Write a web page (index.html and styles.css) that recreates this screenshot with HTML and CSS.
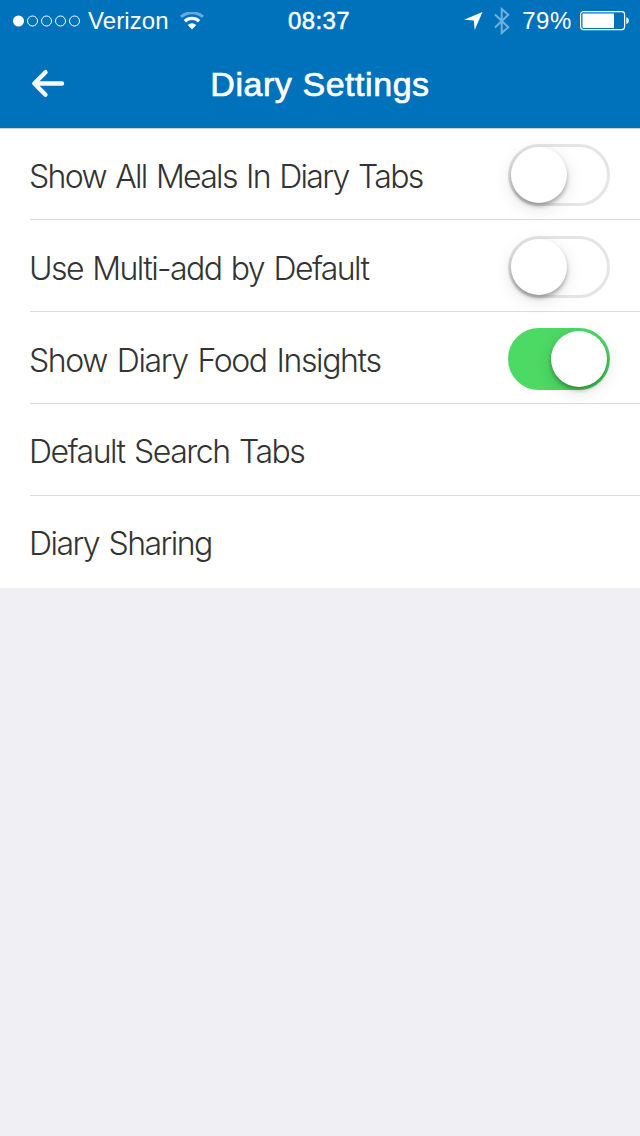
FILE: index.html
```html
<!DOCTYPE html>
<html lang="en">
<head>
    <meta charset="UTF-8">
    <title>Diary Settings</title>
    <link rel="stylesheet" href="styles.css">
</head>

<body>
<header class="header">
    <div class="status">
        <div class="status-left">
            <svg class="signal" width="68" height="14" viewBox="0 0 68 14" fill="none" stroke="#fff" stroke-width="1">
                <circle cx="5.5" cy="7" r="5.5" fill="#fff" stroke="none"/>
                <circle cx="19.5" cy="7" r="5"/>
                <circle cx="33.5" cy="7" r="5"/>
                <circle cx="47.5" cy="7" r="5"/>
                <circle cx="61.5" cy="7" r="5"/>
            </svg>
            <span class="carrier">Verizon</span>
            <svg class="wifi" width="24" height="18" viewBox="0 0 24 18" fill="none" stroke="#fff" stroke-width="3.2">
                <path d="M1 4.9A16.5 16.5 0 0 1 23 4.9" stroke-width="3" opacity=".4"/>
                <path d="M4.9 9.2A10.5 10.5 0 0 1 19.1 9.2"/>
                <path d="M12 17.4L7.8 13A5.9 5.9 0 0 1 16.2 13Z" fill="#fff" stroke="none"/>
            </svg>
        </div>
        <span class="time">08:37</span>
        <div class="status-right">
            <svg class="location" width="19" height="18" viewBox="0 0 19 18">
                <path d="M18.5 0L10.7 18L9.8 8.6L0 7.8Z" fill="#fff"/>
            </svg>
            <svg class="bluetooth" width="16" height="28" viewBox="0 0 16 28" fill="none" stroke="#6cb1e0" stroke-width="2">
                <path d="M1 7.5L14.3 20.2L7.7 26V2L14.3 7.8L1 20.5"/>
            </svg>
            <span class="percent">79%</span>
            <svg class="battery" width="49" height="20" viewBox="0 0 49 20">
                <rect x=".6" y=".6" width="44" height="18" rx="2.8" fill="none" stroke="#fff" stroke-width="1.2"/>
                <rect x="2.5" y="2.5" width="31.5" height="14.5" rx=".8" fill="#fff"/>
                <path d="M46.3 6.2C49.7 6.8 49.7 12.4 46.3 13Z" fill="#fff"/>
            </svg>
        </div>
    </div>
    <div class="nav">
        <svg class="back" width="34" height="30" viewBox="0 0 34 30" fill="none" stroke="#f7f7fc" stroke-width="4.4" stroke-linecap="round" stroke-linejoin="round">
            <path d="M14.5 3.2L3.3 14.5L14.5 25.8M4 14.5H31"/>
        </svg>
        <h1 class="title">Diary Settings</h1>
    </div>
</header>
<ul class="settings">
    <li class="row">
        <span class="label label-meals">Show All Meals In Diary Tabs</span>
        <span class="switch"><i class="knob"></i></span>
    </li>
    <li class="row">
        <span class="label label-multi">Use Multi-add by Default</span>
        <span class="switch"><i class="knob"></i></span>
    </li>
    <li class="row">
        <span class="label label-insights">Show Diary Food Insights</span>
        <span class="switch on"><i class="knob"></i></span>
    </li>
    <li class="row link">
        <span class="label label-search">Default Search Tabs</span>
    </li>
    <li class="row link">
        <span class="label label-sharing">Diary Sharing</span>
    </li>
</ul>
</body>
</html>
```
FILE: styles.css
```css
body,
ul,
li,
h1 {
    margin: 0;
    padding: 0;
    list-style: none;
}
body {
    background: #efeff4;
    font-family: "Liberation Sans", Arial, sans-serif;
    color: #333;
}
svg {
    display: block;
    flex: none;
}
.header {
    height: 128px;
    background: #0072bc;
    color: #fff;
}
.status {
    display: grid;
    grid-template-columns: 1fr auto 1fr;
    align-items: center;
    height: 40px;
    padding: 0 11px 0 9px;
    font-size: 24px;
    line-height: 40px;
    white-space: nowrap;
}
.status-left,
.status-right {
    display: flex;
    align-items: center;
    height: 41px;
}
.status-left {
    padding-left: 4px;
}
.status-right {
    justify-content: flex-end;
}
.carrier {
    margin-left: 7px;
    letter-spacing: 0.1px;
}
.wifi {
    margin-left: 11px;
}
.time {
    letter-spacing: 0.4px;
    -webkit-text-stroke: 0.5px #fff;
}
.bluetooth {
    margin-left: 11px;
}
.percent {
    margin-left: 12px;
    letter-spacing: 0.6px;
}
.battery {
    margin-left: 8px;
}
.nav {
    display: grid;
    grid-template-columns: 34px 1fr 34px;
    align-items: center;
    height: 88px;
    padding: 0 31px;
}
.title {
    font-size: 34px;
    font-weight: normal;
    line-height: 88px;
    letter-spacing: 0.55px;
    text-align: center;
    -webkit-text-stroke: 0.7px #fff;
}
.settings {
    padding-left: 30px;
    background: #fff;
    box-shadow: inset 0 1px #c8cdd2;
}
.row {
    display: flex;
    justify-content: space-between;
    align-items: flex-start;
    box-sizing: border-box;
    height: 92px;
    padding: 16px 30px 0 0;
    border-bottom: 1px solid #dcdcdf;
}
.row:last-child {
    border-bottom: none;
}
.label {
    font-family: Inter, "Liberation Sans", sans-serif;
    font-size: 32px;
    font-weight: 300;
    line-height: 65px;
    margin-left: -1px;
    word-spacing: 2px;
    white-space: nowrap;
}
.link .label {
    line-height: 63px;
}
.label-meals {
    letter-spacing: -1.68px;
}
.label-multi {
    letter-spacing: -1.58px;
}
.label-insights {
    letter-spacing: -1.36px;
}
.label-search {
    letter-spacing: -1.5px;
}
.label-sharing {
    letter-spacing: -1.55px;
}
.switch {
    display: flex;
    box-sizing: border-box;
    width: 102px;
    height: 62px;
    border: 3px solid #e5e5e5;
    border-radius: 31px;
}
.switch.on {
    justify-content: flex-end;
    border-color: #4cd964;
    background: #4cd964;
}
.knob {
    width: 56px;
    height: 56px;
    border-radius: 50%;
    background: #fff;
    box-shadow: 0 3px 4px rgba(0, 0, 0, 0.3), 0 5px 18px rgba(0, 0, 0, 0.12);
}
```
